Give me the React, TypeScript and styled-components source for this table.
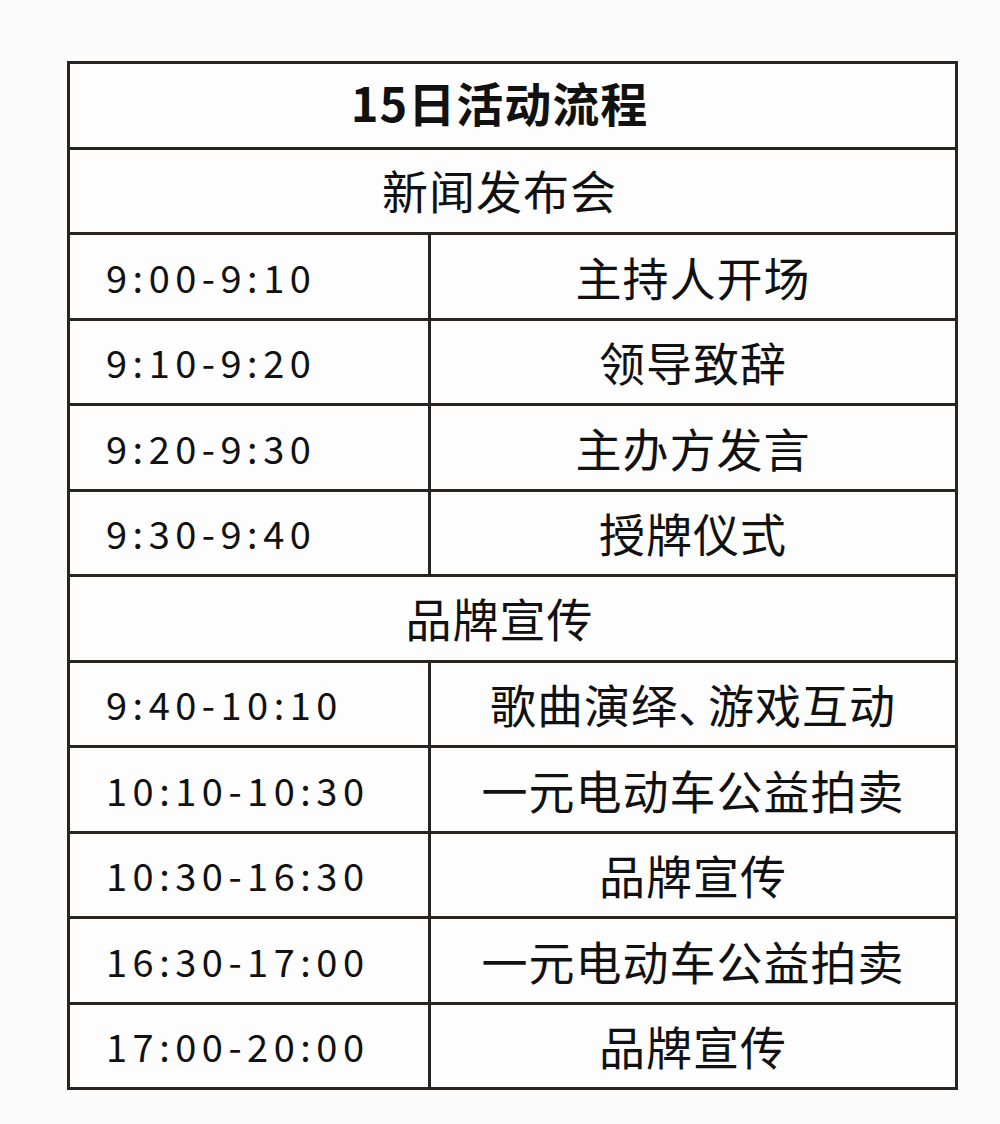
import styled, { createGlobalStyle } from "styled-components";

const GlobalStyle = createGlobalStyle`
  html, body {
    margin: 0;
    padding: 0;
    background: #fbfbfc;
  }
  body {
    font-family: "Noto Sans CJK SC", "Noto Sans", sans-serif;
    color: #111;
  }
`;

const Page = styled.div`
  width: 1000px;
  height: 1124px;
  padding: 61px 0 0 67px;
  box-sizing: border-box;
`;

const Table = styled.div`
  display: grid;
  grid-template-columns: 358px 524px;
  grid-auto-rows: 82.5px;
  gap: 3px;
  padding: 3px;
  width: 891px;
  box-sizing: border-box;
  background: #2a2421;
`;

const HeaderCell = styled.div<{ $bold?: boolean }>`
  grid-column: 1 / -1;
  display: flex;
  align-items: center;
  justify-content: center;
  padding-right: 26px;
  padding-bottom: ${(p) => (p.$bold ? "6px" : "2px")};
  background: #fdfdfe;
  font-size: ${(p) => (p.$bold ? "47px" : "46px")};
  font-weight: ${(p) => (p.$bold ? 700 : 400)};
  letter-spacing: 1px;
  line-height: 1.2;
  color: #111;
`;

const TimeCell = styled.div`
  display: flex;
  align-items: center;
  padding-left: 36px;
  background: #fdfdfe;
  font-size: 38px;
  letter-spacing: 5.5px;
  color: #111;
`;

const EventCell = styled.div`
  display: flex;
  align-items: center;
  justify-content: center;
  background: #fdfdfe;
  font-size: 46px;
  letter-spacing: 1px;
  line-height: 1.2;
  color: #111;
`;

const EventText = styled.span`
  white-space: nowrap;
`;

// the enumeration comma sits tight against the next word in the reference
const Comma = styled.span`
  margin-right: -17px;
`;

type Row = { header: string; bold?: boolean } | { time: string; event: string };

const rows: Row[] = [
  { header: "15日活动流程", bold: true },
  { header: "新闻发布会" },
  { time: "9:00-9:10", event: "主持人开场" },
  { time: "9:10-9:20", event: "领导致辞" },
  { time: "9:20-9:30", event: "主办方发言" },
  { time: "9:30-9:40", event: "授牌仪式" },
  { header: "品牌宣传" },
  { time: "9:40-10:10", event: "歌曲演绎、游戏互动" },
  { time: "10:10-10:30", event: "一元电动车公益拍卖" },
  { time: "10:30-16:30", event: "品牌宣传" },
  { time: "16:30-17:00", event: "一元电动车公益拍卖" },
  { time: "17:00-20:00", event: "品牌宣传" },
];

function renderEvent(text: string) {
  const parts = text.split("、");
  return (
    <EventText>
      {parts.map((p, i) => (
        <span key={i}>
          {p}
          {i < parts.length - 1 && <Comma>、</Comma>}
        </span>
      ))}
    </EventText>
  );
}

export default function App() {
  return (
    <Page>
      <GlobalStyle />
      <Table>
        {rows.map((r, i) =>
          "header" in r ? (
            <HeaderCell key={i} $bold={r.bold}>
              {r.header}
            </HeaderCell>
          ) : (
            [
              <TimeCell key={i + "t"}>{r.time}</TimeCell>,
              <EventCell key={i + "e"}>{renderEvent(r.event)}</EventCell>,
            ]
          )
        )}
      </Table>
    </Page>
  );
}
